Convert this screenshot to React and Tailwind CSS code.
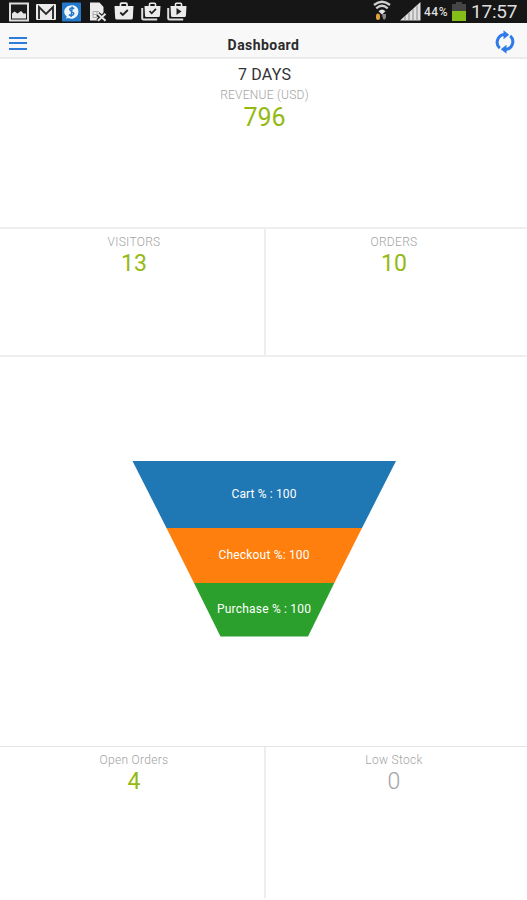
import React from 'react';

const PictureIcon = () => (
  <svg width="20" height="20" viewBox="0 0 20 20">
    <rect x="1" y="1.500" width="18" height="17" fill="#1b1b1b" stroke="#dedede" strokeWidth="2" />
    <path d="M3 16.500V11.500l2.500-2 3 2L12 9l2.500 2.500H17v5z" fill="#e6e6e6" />
  </svg>
);

const MailIcon = () => (
  <svg width="22" height="20" viewBox="0 0 22 20">
    <rect x="1" y="2" width="20" height="16" rx="1" fill="#ececec" />
    <path d="M4 17V5L11 12l7-7v12" fill="none" stroke="#2b2b2b" strokeWidth="1.900" />
  </svg>
);

const BubbleIcon = () => (
  <svg width="19" height="20" viewBox="0 0 19 20">
    <rect x="0" y="0.500" width="19" height="19" rx="0.5" fill="#2479cb" />
    <path d="M9.800 3.200c4 0 6.600 2.600 6.600 6.200 0 4.200-3.100 7.300-7.200 7.300-1 0-2-.2-2.800-.6l-2.400.6.8-2.100C3.400 13.300 2.200 11.700 2.200 10c0-3.900 3.500-6.800 7.600-6.800z" fill="#eef5fc" />
    <path d="M12.300 6.700c-1.800-1.300-4.500-.8-4.500.9 0 2 4 1.700 4 3.900 0 2-3 2.500-4.900 1.100M10.300 4.500l-1.200 10.500" fill="none" stroke="#2479cb" strokeWidth="1.500" />
  </svg>
);

const FileErrorIcon = () => (
  <svg width="19" height="21" viewBox="0 0 19 21">
    <path d="M1 .5h9.500L14.500 5v13.500H1z" fill="#ececec" />
    <path d="M4 9.500h6M4 12.500h4M4 15.500h4M4 9.500v6M8 9.500v6" stroke="#aaa" strokeWidth="1" fill="none" />
    <path d="M9 12l7.500 7M16.500 12l-7.500 7" stroke="#1b1b1b" strokeWidth="4.500" />
    <path d="M9 11.800l7.500 7M16.500 11.800L9 18.800" stroke="#e6e6e6" strokeWidth="2" />
  </svg>
);

const BagIcon = () => (
  <svg width="20" height="20" viewBox="0 0 20 20">
    <path d="M6.500 5V2.200q0-1 1-1H12q1 0 1 1V5" fill="none" stroke="#ececec" strokeWidth="1.700" />
    <path d="M.5 4h19l-.7 12q-.1 1.500-1.500 1.500H2.700q-1.400 0-1.500-1.500z" fill="#ececec" />
    <path d="M6.300 10.500L8.800 13l5-5" fill="none" stroke="#222" strokeWidth="1.900" />
  </svg>
);

const StackedBagIcon = ({ children }) => (
  <svg width="20" height="20" viewBox="0 0 20 20">
    <path d="M1.200 6V16q0 1.500 1.500 1.500h13.500" fill="none" stroke="#dedede" strokeWidth="2" />
    <path d="M8.500 4V2.200q0-1 1-1h4q1 0 1 1V4" fill="none" stroke="#ececec" strokeWidth="1.600" />
    <path d="M3.500 4H19.500l-.6 9.700q-.1 1.300-1.300 1.300H5.300q-1.300 0-1.300-1.300z" fill="#ececec" />
    {children}
  </svg>
);

const WifiIcon = () => (
  <svg width="18" height="22" viewBox="0 0 18 22">
    <path d="M1 5Q9-1.500 17 5" fill="none" stroke="#d0d0d0" strokeWidth="2.300" />
    <path d="M3.300 8.300q5.700-5 11.400 0" fill="none" stroke="#d0d0d0" strokeWidth="2.300" />
    <path d="M5.500 11.200q3.500-3.200 7 0L9 14.500z" fill="#e4e4e4" />
    <path d="M3 15.500q0-2 2-2t2 2v2.500q0 2-2 2t-2-2z" fill="#e3a13c" />
    <path d="M9 14h4v3l-1 2.500h-1.500L9.500 17z" fill="#888" />
  </svg>
);

const SignalIcon = () => (
  <svg width="21" height="20" viewBox="0 0 21 20">
    <path d="M0 18.500L20.500 0v18.500z" fill="#e0e0e0" />
    <path d="M5 14v5M9 10.500v8M13 7v12M17 3v16" stroke="#8a8a8a" strokeWidth="1" />
  </svg>
);

const BatteryIcon = () => (
  <svg width="14" height="20" viewBox="0 0 14 20">
    <path d="M4 0h6v2h4v7H0V2h4z" fill="#454545" />
    <rect y="9" width="14" height="10" fill="#86bd18" />
  </svg>
);

const SyncIcon = () => (
  <svg width="20" height="24" viewBox="0 0 20 24">
    <g fill="none" stroke="#2f7bea" strokeWidth="3">
      <path d="M4.800 18.200A7.800 7.800 0 0 1 9.500 4.600" />
      <path d="M15.200 5.800A7.800 7.800 0 0 1 10.500 19.400" />
    </g>
    <path d="M8.500.3l5.700 4.400-5.700 4.500z" fill="#2f7bea" />
    <path d="M11.500 23.700l-5.700-4.400 5.700-4.500z" fill="#2f7bea" />
  </svg>
);

const StatusBar = () => (
  <div className="flex h-[23px] items-start bg-[#161616] pt-[2px] pl-[9px] text-[#dedede]">
    <div className="flex w-[364px] shrink-0">
      <div className="w-[26px]"><PictureIcon /></div>
      <div className="w-[27px]"><MailIcon /></div>
      <div className="w-[27px]"><BubbleIcon /></div>
      <div className="w-[25px]"><FileErrorIcon /></div>
      <div className="w-[27px]"><BagIcon /></div>
      <div className="w-[26px]">
        <StackedBagIcon>
          <path d="M8.500 9l2.200 2.300L15 6.800" fill="none" stroke="#222" strokeWidth="1.800" />
        </StackedBagIcon>
      </div>
      <StackedBagIcon>
        <path d="M9.500 6l5 3.500-5 3.500z" fill="#222" />
      </StackedBagIcon>
    </div>
    <div className="-mt-[2px] w-[27px] shrink-0"><WifiIcon /></div>
    <div className="w-[24px] shrink-0"><SignalIcon /></div>
    <span className="w-[28px] shrink-0 text-[12px] leading-[20px] font-medium tracking-[0.5px]">44%</span>
    <div className="w-[19px] shrink-0"><BatteryIcon /></div>
    <span className="text-[19px] leading-[20px] tracking-[-0.2px] whitespace-nowrap">17:57</span>
  </div>
);

const Stat = ({ label, value, muted }) => (
  <div className="flex flex-col items-center pt-[5px]">
    <span className="text-[12px] leading-[16px] font-light tracking-[0.3px] text-[#a3a3a3]">{label}</span>
    <span className={`text-[23px] leading-[27px] ${muted ? 'font-light text-[#a3a3a3]' : 'text-[#94b913]'}`}>{value}</span>
  </div>
);

const Funnel = () => (
  <svg width="264" height="177" viewBox="0 0 264 177">
    <path d="M0.500 0H264L230 67H34.500z" fill="#1f77b4" />
    <path d="M34.500 67H230L202.300 122H62z" fill="#ff7f0e" />
    <path d="M62 122H202.300L176 175.500H88.500z" fill="#2ca02c" />
    <g fill="#fff" fontSize="12" textAnchor="middle">
      <text x="132" y="37" textLength="65">Cart % : 100</text>
      <text x="132" y="98" textLength="91">Checkout %: 100</text>
      <text x="132" y="152" textLength="94">Purchase % : 100</text>
    </g>
  </svg>
);

const App = () => (
  <div className="flex h-[900px] w-[527px] flex-col overflow-hidden bg-white font-['Roboto',sans-serif]">
    <StatusBar />

    <header className="flex h-[36px] shrink-0 items-center justify-between border-b-2 border-[#ebebeb] bg-[#f8f8f8] pr-[12px] pl-[9px]">
      <div className="flex w-[20px] flex-col gap-[3.5px] pt-[6px]">
        <div className="h-[2px] w-[18px] bg-[#2f7bd9]"></div>
        <div className="h-[2px] w-[18px] bg-[#2f7bd9]"></div>
        <div className="h-[2px] w-[18px] bg-[#2f7bd9]"></div>
      </div>
      <h1 className="pt-[10px] pl-[3px] text-[14px] leading-[16px] font-bold tracking-[0.45px] text-[#2b2b2b]">Dashboard</h1>
      <div className="pt-[3px]"><SyncIcon /></div>
    </header>

    <section className="flex h-[168px] shrink-0 flex-col items-center pt-[7px] pl-[2px]">
      <span className="text-[16px] leading-[18px] tracking-[0.2px] text-[#333]">7 DAYS</span>
      <span className="mt-[3px] text-[12px] leading-[16px] font-light tracking-[0.25px] text-[#a3a3a3]">REVENUE (USD)</span>
      <span className="mt-[1px] text-[25px] leading-[28px] text-[#94b913]">796</span>
    </section>

    <section className="grid h-[130px] shrink-0 grid-cols-[266px_261px] border-y-2 border-[#eee]">
      <div className="border-r-2 border-[#eee] pl-[4px]"><Stat label="VISITORS" value="13" /></div>
      <div className="pr-[5px]"><Stat label="ORDERS" value="10" /></div>
    </section>

    <section className="flex h-[389px] shrink-0 justify-center pt-[104px]">
      <Funnel />
    </section>

    <section className="grid h-[152px] shrink-0 grid-cols-[266px_261px] border-t border-[#e4e4e4]">
      <div className="border-r-2 border-[#eee] pl-[4px]"><Stat label="Open Orders" value="4" /></div>
      <div className="pr-[5px]"><Stat label="Low Stock" value="0" muted /></div>
    </section>
  </div>
);

export default App;
